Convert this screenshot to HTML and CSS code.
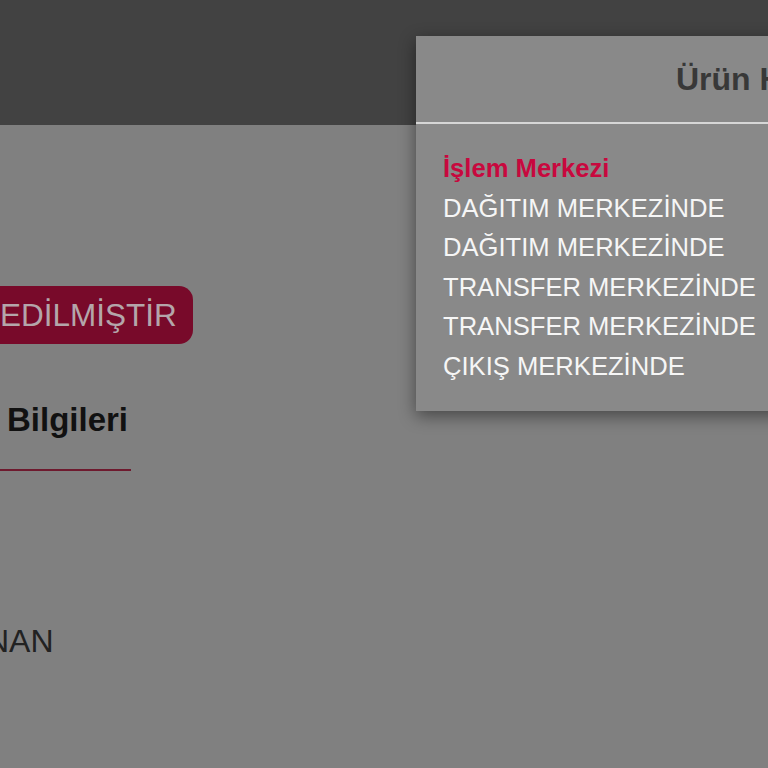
FILE: index.html
```html
<!DOCTYPE html>
<html lang="tr">
<head>
<meta charset="utf-8">
<title>Kargo Takip</title>
<link rel="stylesheet" href="styles.css">
</head>
<body>
  <header class="topbar"></header>

  <main class="content">
    <div class="status-badge">EDİLMİŞTİR</div>
    <h2 class="section-title">Bilgileri</h2>
    <div class="section-rule"></div>
    <p class="field-value">NAN</p>
  </main>

  <div class="modal">
    <div class="modal-head">
      <h3 class="modal-title">Ürün Hareketleri</h3>
    </div>
    <ul class="moves">
      <li class="moves-head">İşlem Merkezi</li>
      <li>DAĞITIM MERKEZİNDE</li>
      <li>DAĞITIM MERKEZİNDE</li>
      <li>TRANSFER MERKEZİNDE</li>
      <li>TRANSFER MERKEZİNDE</li>
      <li>ÇIKIŞ MERKEZİNDE</li>
    </ul>
  </div>
</body>
</html>
```

FILE: styles.css
```css
html, body {
  margin: 0;
  padding: 0;
}

body {
  width: 768px;
  height: 768px;
  overflow: hidden;
  position: relative;
  background: #808080;
  font-family: "Liberation Sans", Arial, sans-serif;
}

.topbar {
  height: 125px;
  background: #424242;
}

.content {
  display: flex;
  flex-direction: column;
  align-items: flex-start;
}

.status-badge {
  margin-top: 161px;
  height: 58px;
  display: flex;
  align-items: center;
  padding: 0 16px 0 0;
  background: #780a2a;
  color: #b4a6aa;
  font-size: 31.5px;
  border-radius: 0 14px 14px 0;
}

.section-title {
  margin: 57px 0 0;
  padding-left: 7px;
  font-size: 33px;
  font-weight: bold;
  line-height: normal;
  color: #111111;
}

.section-rule {
  margin-top: 30px;
  width: 131px;
  height: 2px;
  background: #6e1a2e;
}

.field-value {
  margin: 152px 0 0 -14px;
  font-size: 32px;
  line-height: normal;
  color: #222222;
}

/* movement history dialog, drawn over the dimmed page */
.modal {
  position: absolute;
  top: 36px;
  left: 416px;
  width: 769px;
  background: #898989;
  box-shadow: 0 5px 16px rgba(0, 0, 0, 0.45);
}

.modal-head {
  padding: 25px 0 24px;
  border-bottom: 2px solid #d6d6d6;
}

.modal-title {
  margin: 0;
  text-align: center;
  font-size: 32px;
  font-weight: bold;
  line-height: normal;
  color: #383838;
}

.moves {
  list-style: none;
  margin: 0;
  padding: 25px 0 24px 27px;
}

.moves li {
  font-size: 25.6px;
  line-height: 39.6px;
  color: #f6f6f6;
  white-space: nowrap;
}

.moves .moves-head {
  font-weight: bold;
  color: #c8083e;
}
```
